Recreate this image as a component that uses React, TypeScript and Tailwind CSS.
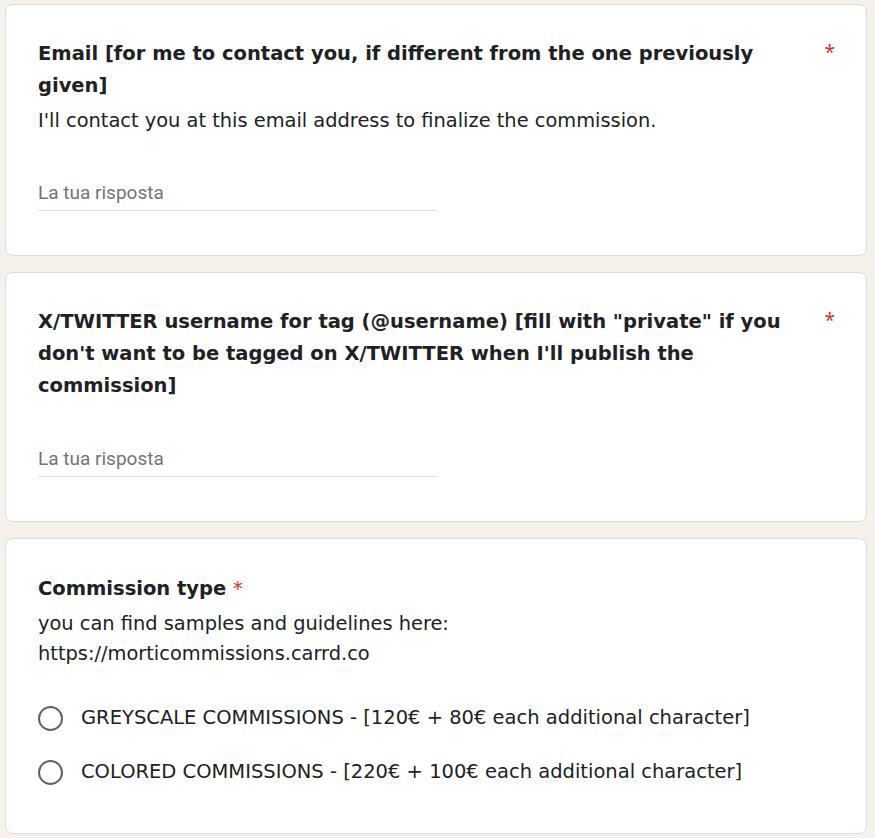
const titleFont = "font-['DejaVu_Sans',sans-serif]";

function Asterisk() {
  return <span className="text-[#d93025] font-normal">*</span>;
}

function TextQuestion({ title, description }: { title: string; description?: string }) {
  return (
    <div className="rounded-lg border border-[#dadce0] bg-white pl-[32px] pr-[31px] pt-[33px] pb-[44px]">
      <div className="flex items-start">
        <h2 className={`${titleFont} w-[760px] text-[19.5px] font-bold leading-[32px] text-[#202124]`}>{title}</h2>
        <span className="ml-auto -mt-[2px] text-[19px] leading-[32px]">
          <Asterisk />
        </span>
      </div>
      {description && (
        <p className={`${titleFont} mt-[4px] text-[19.4px] leading-[30px] text-[#202124]`}>{description}</p>
      )}
      <div className="mt-[44px] w-[399px] border-b border-[#e0e0e0] pb-[4px]">
        <span className="font-['Roboto',sans-serif] text-[19px] leading-[26px] text-[#70757a]">La tua risposta</span>
      </div>
    </div>
  );
}

function Radio({ label }: { label: string }) {
  return (
    <label className="flex h-[54px] items-center gap-[18px]">
      <span className="h-[25px] w-[25px] shrink-0 rounded-full border-2 border-[#5f6368]" />
      <span className={`${titleFont} text-[19.5px] text-[#202124]`}>{label}</span>
    </label>
  );
}

export default function App() {
  return (
    <div className="min-h-screen bg-[#f6f1ea] pl-[5px] pr-[8px] pt-[4px] pb-[8px]">
      <div className="flex flex-col gap-[16px]">
        <TextQuestion
          title="Email [for me to contact you, if different from the one previously given]"
          description="I'll contact you at this email address to finalize the commission."
        />
        <TextQuestion title={'X/TWITTER username for tag (@username) [fill with "private" if you don\'t want to be tagged on X/TWITTER when I\'ll publish the commission]'} />
        <div className="rounded-lg border border-[#dadce0] bg-white pl-[32px] pr-[31px] pt-[34px] pb-[34px]">
          <h2 className={`${titleFont} text-[19.5px] font-bold leading-[32px] text-[#202124]`}>
            Commission type <Asterisk />
          </h2>
          <p className={`${titleFont} mt-[4px] text-[19.4px] leading-[30px] text-[#202124]`}>
            you can find samples and guidelines here:
            <br />
            https://morticommissions.carrd.co
          </p>
          <div className="mt-[22px] flex flex-col">
            <Radio label="GREYSCALE COMMISSIONS - [120€ + 80€ each additional character]" />
            <Radio label="COLORED COMMISSIONS - [220€ + 100€ each additional character]" />
          </div>
        </div>
      </div>
    </div>
  );
}
